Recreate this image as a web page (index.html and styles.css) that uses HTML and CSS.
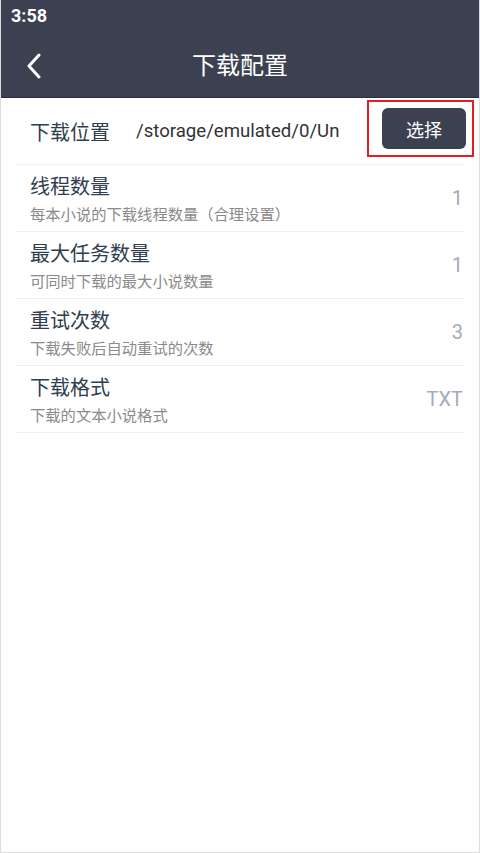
FILE: index.html
```html
<!DOCTYPE html>
<html lang="zh-CN">
<head>
    <meta charset="UTF-8">
    <meta name="viewport" content="width=device-width, initial-scale=1.0">
    <title>下载配置</title>
    <link rel="stylesheet" href="styles.css">
</head>
<body>
    <div class="screen">
        <header class="topbar">
            <div class="status">3:58</div>
            <div class="toolbar">
                <svg class="back" width="16" height="26" viewBox="0 0 16 26">
                    <path d="M13 2 L3 13 L13 24" fill="none" stroke="#fff" stroke-width="3" stroke-linecap="round" stroke-linejoin="round"/>
                </svg>
                <h1>下载配置</h1>
            </div>
        </header>

        <div class="list">
            <!-- download path -->
            <div class="row path-row">
                <span class="label">下载位置</span>
                <span class="path">/storage/emulated/0/Un</span>
                <div class="pick-box">
                    <button type="button" class="pick">选择</button>
                </div>
            </div>

            <div class="row">
                <div class="text">
                    <div class="title">线程数量</div>
                    <div class="desc">每本小说的下载线程数量（合理设置）</div>
                </div>
                <span class="value">1</span>
            </div>

            <div class="row">
                <div class="text">
                    <div class="title">最大任务数量</div>
                    <div class="desc">可同时下载的最大小说数量</div>
                </div>
                <span class="value">1</span>
            </div>

            <div class="row">
                <div class="text">
                    <div class="title">重试次数</div>
                    <div class="desc">下载失败后自动重试的次数</div>
                </div>
                <span class="value">3</span>
            </div>

            <div class="row">
                <div class="text">
                    <div class="title">下载格式</div>
                    <div class="desc">下载的文本小说格式</div>
                </div>
                <span class="value">TXT</span>
            </div>
        </div>
    </div>
</body>
</html>
```

FILE: styles.css
```css
body {
    margin: 0;
    padding: 0;
    font-family: Roboto, "Noto Sans CJK SC", sans-serif;
    background-color: #fff;
}
.screen {
    width: 480px;
    height: 853px;
    box-sizing: border-box;
    border: 1px solid #dcdcdc;
    border-top: none;
    background-color: #fff;
}
.topbar {
    background-color: #3c4151;
    color: white;
    border-bottom: 1px solid #2a2e3a;
}
.status {
    height: 32px;
    line-height: 32px;
    padding-left: 10px;
    font-size: 18px;
    font-weight: bold;
}
.toolbar {
    height: 65px;
    display: flex;
    align-items: center;
    justify-content: center;
    position: relative;
}
.back {
    position: absolute;
    left: 25px;
    top: 21px;
}
.toolbar h1 {
    margin: 0 0 3px 0;
    font-size: 24px;
    font-weight: normal;
    font-family: "Noto Sans CJK SC", sans-serif;
}
.list {
    padding: 0 15px 0 15px;
}
.row {
    display: flex;
    align-items: center;
    height: 66px;
    border-bottom: 1px solid #eeeeee;
    padding: 0 0 0 14px;
}
.label {
    font-family: "Noto Sans CJK SC", sans-serif;
    font-size: 20px;
    color: #2f3e4e;
    width: 106px;
}
.path {
    font-size: 18.6px;
    color: #333;
    flex: 1;
    white-space: nowrap;
    overflow: hidden;
}
.pick-box {
    border: 2px solid #e02020;
    width: 107px;
    height: 57px;
    box-sizing: border-box;
    display: flex;
    align-items: center;
    padding-left: 13px;
    margin-right: -10px;
    margin-top: -5px;
}
.pick {
    width: 84px;
    height: 41px;
    border: none;
    border-radius: 6px;
    background-color: #3c4151;
    color: white;
    font-family: "Noto Sans CJK SC", sans-serif;
    font-size: 18px;
    padding: 0;
}
.text {
    flex: 1;
    font-family: "Noto Sans CJK SC", sans-serif;
}
.title {
    font-size: 20px;
    color: #2f3e4e;
    line-height: 26px;
}
.desc {
    font-size: 15.3px;
    color: #8a8a8a;
    line-height: 22px;
    margin-top: 3px;
}
.value {
    font-size: 20px;
    color: #a4abb6;
    margin-right: 1px;
}
```
